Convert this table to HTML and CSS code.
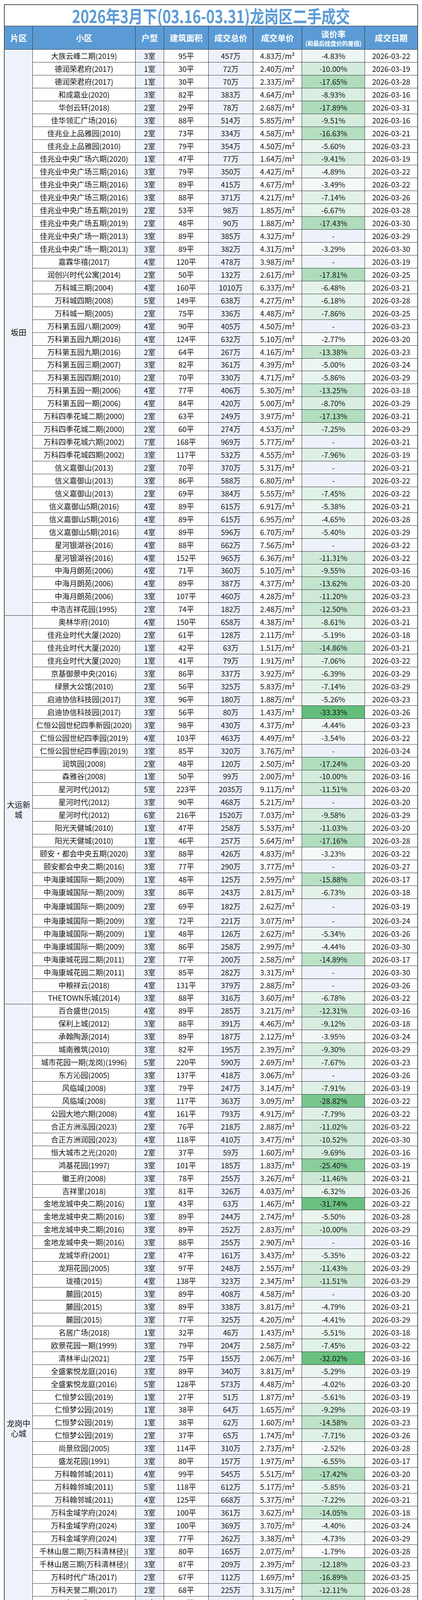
FILE: index.html
```html
<!DOCTYPE html>
<html lang="zh-CN">
<head>
<meta charset="utf-8">
<title>2026年3月下(03.16-03.31)龙岗区二手成交</title>
<link rel="stylesheet" href="styles.css">
</head>
<body>
<div class="sheet">
  <div class="title"><h1>2026年3月下(03.16-03.31)龙岗区二手成交</h1></div>
  <div class="clip">
  <table class="grid">
    <colgroup>
      <col class="w-area"><col class="w-name"><col class="w-room"><col class="w-size"><col class="w-total"><col class="w-unit"><col class="w-rate"><col class="w-date">
    </colgroup>
    <thead>
      <tr><th>片区</th><th>小区</th><th>户型</th><th>建筑面积</th><th>成交总价</th><th>成交单价</th><th><span class="h-main">谈价率</span><span class="h-sub">(和最后挂盘价的差值)</span></th><th>成交日期</th></tr>
    </thead>
    <tbody>
<tr><td class="area" rowspan="44">坂田</td><td>大族云峰二期(2019)</td><td class="tint">3室</td><td>95平</td><td class="tint">457万</td><td>4.83万/m²</td><td class="rate" style="--r:4.83">-4.83%</td><td>2026-03-22</td></tr>
<tr><td>德润荣君府(2017)</td><td class="tint">1室</td><td>30平</td><td class="tint">72万</td><td>2.40万/m²</td><td class="rate" style="--r:10.00">-10.00%</td><td>2026-03-19</td></tr>
<tr><td>德润荣君府(2017)</td><td class="tint">1室</td><td>30平</td><td class="tint">70万</td><td>2.33万/m²</td><td class="rate" style="--r:17.65">-17.65%</td><td>2026-03-28</td></tr>
<tr><td>和成嘉业(2020)</td><td class="tint">3室</td><td>82平</td><td class="tint">383万</td><td>4.64万/m²</td><td class="rate" style="--r:8.93">-8.93%</td><td>2026-03-16</td></tr>
<tr><td>华创云轩(2018)</td><td class="tint">2室</td><td>29平</td><td class="tint">78万</td><td>2.68万/m²</td><td class="rate" style="--r:17.89">-17.89%</td><td>2026-03-31</td></tr>
<tr><td>佳华领汇广场(2016)</td><td class="tint">3室</td><td>88平</td><td class="tint">514万</td><td>5.85万/m²</td><td class="rate" style="--r:9.51">-9.51%</td><td>2026-03-16</td></tr>
<tr><td>佳兆业上品雅园(2010)</td><td class="tint">2室</td><td>73平</td><td class="tint">334万</td><td>4.58万/m²</td><td class="rate" style="--r:16.63">-16.63%</td><td>2026-03-21</td></tr>
<tr><td>佳兆业上品雅园(2010)</td><td class="tint">2室</td><td>79平</td><td class="tint">354万</td><td>4.50万/m²</td><td class="rate" style="--r:5.60">-5.60%</td><td>2026-03-23</td></tr>
<tr><td>佳兆业中央广场六期(2020)</td><td class="tint">1室</td><td>47平</td><td class="tint">77万</td><td>1.64万/m²</td><td class="rate" style="--r:9.41">-9.41%</td><td>2026-03-19</td></tr>
<tr><td>佳兆业中央广场三期(2016)</td><td class="tint">3室</td><td>79平</td><td class="tint">350万</td><td>4.42万/m²</td><td class="rate" style="--r:4.89">-4.89%</td><td>2026-03-22</td></tr>
<tr><td>佳兆业中央广场三期(2016)</td><td class="tint">3室</td><td>89平</td><td class="tint">415万</td><td>4.67万/m²</td><td class="rate" style="--r:3.49">-3.49%</td><td>2026-03-22</td></tr>
<tr><td>佳兆业中央广场三期(2016)</td><td class="tint">3室</td><td>88平</td><td class="tint">371万</td><td>4.21万/m²</td><td class="rate" style="--r:7.14">-7.14%</td><td>2026-03-26</td></tr>
<tr><td>佳兆业中央广场五期(2019)</td><td class="tint">2室</td><td>53平</td><td class="tint">98万</td><td>1.85万/m²</td><td class="rate" style="--r:6.67">-6.67%</td><td>2026-03-28</td></tr>
<tr><td>佳兆业中央广场五期(2019)</td><td class="tint">2室</td><td>48平</td><td class="tint">90万</td><td>1.88万/m²</td><td class="rate" style="--r:17.43">-17.43%</td><td>2026-03-30</td></tr>
<tr><td>佳兆业中央广场一期(2013)</td><td class="tint">3室</td><td>89平</td><td class="tint">385万</td><td>4.32万/m²</td><td class="rate na">-</td><td>2026-03-29</td></tr>
<tr><td>佳兆业中央广场一期(2013)</td><td class="tint">3室</td><td>89平</td><td class="tint">382万</td><td>4.31万/m²</td><td class="rate" style="--r:3.29">-3.29%</td><td>2026-03-30</td></tr>
<tr><td>嘉霖华禧(2017)</td><td class="tint">4室</td><td>120平</td><td class="tint">478万</td><td>3.98万/m²</td><td class="rate na">-</td><td>2026-03-19</td></tr>
<tr><td>润创兴时代公寓(2014)</td><td class="tint">2室</td><td>50平</td><td class="tint">132万</td><td>2.61万/m²</td><td class="rate" style="--r:17.81">-17.81%</td><td>2026-03-25</td></tr>
<tr><td>万科城三期(2004)</td><td class="tint">4室</td><td>160平</td><td class="tint">1010万</td><td>6.33万/m²</td><td class="rate" style="--r:6.48">-6.48%</td><td>2026-03-21</td></tr>
<tr><td>万科城四期(2008)</td><td class="tint">5室</td><td>149平</td><td class="tint">638万</td><td>4.27万/m²</td><td class="rate" style="--r:6.18">-6.18%</td><td>2026-03-28</td></tr>
<tr><td>万科城一期(2005)</td><td class="tint">2室</td><td>75平</td><td class="tint">336万</td><td>4.48万/m²</td><td class="rate" style="--r:7.86">-7.86%</td><td>2026-03-25</td></tr>
<tr><td>万科第五园八期(2009)</td><td class="tint">4室</td><td>90平</td><td class="tint">405万</td><td>4.50万/m²</td><td class="rate na">-</td><td>2026-03-23</td></tr>
<tr><td>万科第五园九期(2016)</td><td class="tint">4室</td><td>124平</td><td class="tint">632万</td><td>5.10万/m²</td><td class="rate" style="--r:2.77">-2.77%</td><td>2026-03-20</td></tr>
<tr><td>万科第五园九期(2016)</td><td class="tint">2室</td><td>64平</td><td class="tint">267万</td><td>4.16万/m²</td><td class="rate" style="--r:13.38">-13.38%</td><td>2026-03-23</td></tr>
<tr><td>万科第五园三期(2007)</td><td class="tint">3室</td><td>82平</td><td class="tint">361万</td><td>4.39万/m²</td><td class="rate" style="--r:5.00">-5.00%</td><td>2026-03-24</td></tr>
<tr><td>万科第五园四期(2010)</td><td class="tint">2室</td><td>70平</td><td class="tint">330万</td><td>4.71万/m²</td><td class="rate" style="--r:5.86">-5.86%</td><td>2026-03-29</td></tr>
<tr><td>万科第五园一期(2006)</td><td class="tint">4室</td><td>77平</td><td class="tint">406万</td><td>5.30万/m²</td><td class="rate" style="--r:13.25">-13.25%</td><td>2026-03-18</td></tr>
<tr><td>万科第五园一期(2006)</td><td class="tint">4室</td><td>84平</td><td class="tint">420万</td><td>5.00万/m²</td><td class="rate" style="--r:8.70">-8.70%</td><td>2026-03-29</td></tr>
<tr><td>万科四季花城二期(2000)</td><td class="tint">2室</td><td>63平</td><td class="tint">249万</td><td>3.97万/m²</td><td class="rate" style="--r:17.13">-17.13%</td><td>2026-03-21</td></tr>
<tr><td>万科四季花城二期(2000)</td><td class="tint">2室</td><td>60平</td><td class="tint">274万</td><td>4.53万/m²</td><td class="rate" style="--r:7.25">-7.25%</td><td>2026-03-29</td></tr>
<tr><td>万科四季花城六期(2002)</td><td class="tint">7室</td><td>168平</td><td class="tint">969万</td><td>5.77万/m²</td><td class="rate na">-</td><td>2026-03-21</td></tr>
<tr><td>万科四季花城四期(2002)</td><td class="tint">3室</td><td>117平</td><td class="tint">532万</td><td>4.55万/m²</td><td class="rate" style="--r:7.96">-7.96%</td><td>2026-03-19</td></tr>
<tr><td>信义嘉御山(2013)</td><td class="tint">2室</td><td>70平</td><td class="tint">370万</td><td>5.31万/m²</td><td class="rate na">-</td><td>2026-03-21</td></tr>
<tr><td>信义嘉御山(2013)</td><td class="tint">3室</td><td>86平</td><td class="tint">588万</td><td>6.80万/m²</td><td class="rate na">-</td><td>2026-03-22</td></tr>
<tr><td>信义嘉御山(2013)</td><td class="tint">2室</td><td>69平</td><td class="tint">384万</td><td>5.55万/m²</td><td class="rate" style="--r:7.45">-7.45%</td><td>2026-03-22</td></tr>
<tr><td>信义嘉御山5期(2016)</td><td class="tint">4室</td><td>89平</td><td class="tint">615万</td><td>6.91万/m²</td><td class="rate" style="--r:5.38">-5.38%</td><td>2026-03-21</td></tr>
<tr><td>信义嘉御山5期(2016)</td><td class="tint">4室</td><td>89平</td><td class="tint">615万</td><td>6.95万/m²</td><td class="rate" style="--r:4.65">-4.65%</td><td>2026-03-28</td></tr>
<tr><td>信义嘉御山5期(2016)</td><td class="tint">4室</td><td>89平</td><td class="tint">596万</td><td>6.70万/m²</td><td class="rate" style="--r:5.40">-5.40%</td><td>2026-03-29</td></tr>
<tr><td>星河银湖谷(2016)</td><td class="tint">4室</td><td>88平</td><td class="tint">662万</td><td>7.56万/m²</td><td class="rate na">-</td><td>2026-03-22</td></tr>
<tr><td>星河银湖谷(2016)</td><td class="tint">4室</td><td>152平</td><td class="tint">965万</td><td>6.36万/m²</td><td class="rate" style="--r:11.31">-11.31%</td><td>2026-03-22</td></tr>
<tr><td>中海月朗苑(2006)</td><td class="tint">4室</td><td>71平</td><td class="tint">360万</td><td>5.10万/m²</td><td class="rate" style="--r:9.55">-9.55%</td><td>2026-03-16</td></tr>
<tr><td>中海月朗苑(2006)</td><td class="tint">4室</td><td>89平</td><td class="tint">387万</td><td>4.37万/m²</td><td class="rate" style="--r:13.62">-13.62%</td><td>2026-03-20</td></tr>
<tr><td>中海月朗苑(2006)</td><td class="tint">3室</td><td>107平</td><td class="tint">460万</td><td>4.28万/m²</td><td class="rate" style="--r:11.20">-11.20%</td><td>2026-03-23</td></tr>
<tr><td>中浩吉祥花园(1995)</td><td class="tint">2室</td><td>74平</td><td class="tint">182万</td><td>2.48万/m²</td><td class="rate" style="--r:12.50">-12.50%</td><td>2026-03-23</td></tr>
<tr><td class="area" rowspan="30">大运新城</td><td>奥林华府(2010)</td><td class="tint">4室</td><td>150平</td><td class="tint">658万</td><td>4.38万/m²</td><td class="rate" style="--r:8.61">-8.61%</td><td>2026-03-21</td></tr>
<tr><td>佳兆业时代大厦(2020)</td><td class="tint">2室</td><td>61平</td><td class="tint">128万</td><td>2.11万/m²</td><td class="rate" style="--r:5.19">-5.19%</td><td>2026-03-18</td></tr>
<tr><td>佳兆业时代大厦(2020)</td><td class="tint">1室</td><td>42平</td><td class="tint">63万</td><td>1.51万/m²</td><td class="rate" style="--r:14.86">-14.86%</td><td>2026-03-21</td></tr>
<tr><td>佳兆业时代大厦(2020)</td><td class="tint">1室</td><td>41平</td><td class="tint">79万</td><td>1.91万/m²</td><td class="rate" style="--r:7.06">-7.06%</td><td>2026-03-22</td></tr>
<tr><td>京基御景中央(2016)</td><td class="tint">3室</td><td>86平</td><td class="tint">337万</td><td>3.92万/m²</td><td class="rate" style="--r:6.39">-6.39%</td><td>2026-03-29</td></tr>
<tr><td>绿景大公馆(2010)</td><td class="tint">2室</td><td>56平</td><td class="tint">325万</td><td>5.83万/m²</td><td class="rate" style="--r:7.14">-7.14%</td><td>2026-03-29</td></tr>
<tr><td>启迪协信科技园(2017)</td><td class="tint">3室</td><td>96平</td><td class="tint">180万</td><td>1.88万/m²</td><td class="rate" style="--r:5.26">-5.26%</td><td>2026-03-23</td></tr>
<tr><td>启迪协信科技园(2017)</td><td class="tint">3室</td><td>56平</td><td class="tint">80万</td><td>1.43万/m²</td><td class="rate" style="--r:33.33">-33.33%</td><td>2026-03-26</td></tr>
<tr><td>仁恒公园世纪四季新园(2020)</td><td class="tint">3室</td><td>98平</td><td class="tint">430万</td><td>4.37万/m²</td><td class="rate" style="--r:4.44">-4.44%</td><td>2026-03-23</td></tr>
<tr><td>仁恒公园世纪四季园(2019)</td><td class="tint">4室</td><td>103平</td><td class="tint">463万</td><td>4.49万/m²</td><td class="rate" style="--r:3.54">-3.54%</td><td>2026-03-22</td></tr>
<tr><td>仁恒公园世纪四季园(2019)</td><td class="tint">3室</td><td>85平</td><td class="tint">320万</td><td>3.76万/m²</td><td class="rate na">-</td><td>2026-03-24</td></tr>
<tr><td>润筑园(2008)</td><td class="tint">2室</td><td>48平</td><td class="tint">120万</td><td>2.50万/m²</td><td class="rate" style="--r:17.24">-17.24%</td><td>2026-03-20</td></tr>
<tr><td>森雅谷(2008)</td><td class="tint">1室</td><td>50平</td><td class="tint">99万</td><td>2.00万/m²</td><td class="rate" style="--r:10.00">-10.00%</td><td>2026-03-16</td></tr>
<tr><td>星河时代(2012)</td><td class="tint">5室</td><td>223平</td><td class="tint">2035万</td><td>9.11万/m²</td><td class="rate" style="--r:11.51">-11.51%</td><td>2026-03-20</td></tr>
<tr><td>星河时代(2012)</td><td class="tint">3室</td><td>90平</td><td class="tint">468万</td><td>5.21万/m²</td><td class="rate na">-</td><td>2026-03-20</td></tr>
<tr><td>星河时代(2012)</td><td class="tint">6室</td><td>216平</td><td class="tint">1520万</td><td>7.03万/m²</td><td class="rate" style="--r:9.58">-9.58%</td><td>2026-03-29</td></tr>
<tr><td>阳光天健城(2010)</td><td class="tint">1室</td><td>47平</td><td class="tint">258万</td><td>5.53万/m²</td><td class="rate" style="--r:11.03">-11.03%</td><td>2026-03-20</td></tr>
<tr><td>阳光天健城(2010)</td><td class="tint">1室</td><td>46平</td><td class="tint">257万</td><td>5.64万/m²</td><td class="rate" style="--r:17.16">-17.16%</td><td>2026-03-28</td></tr>
<tr><td>颐安·都会中央五期(2020)</td><td class="tint">3室</td><td>88平</td><td class="tint">426万</td><td>4.83万/m²</td><td class="rate" style="--r:3.23">-3.23%</td><td>2026-03-22</td></tr>
<tr><td>颐安都会中央二期(2016)</td><td class="tint">3室</td><td>77平</td><td class="tint">290万</td><td>3.77万/m²</td><td class="rate na">-</td><td>2026-03-27</td></tr>
<tr><td>中海康城国际一期(2009)</td><td class="tint">1室</td><td>48平</td><td class="tint">125万</td><td>2.59万/m²</td><td class="rate" style="--r:15.88">-15.88%</td><td>2026-03-17</td></tr>
<tr><td>中海康城国际一期(2009)</td><td class="tint">3室</td><td>86平</td><td class="tint">243万</td><td>2.81万/m²</td><td class="rate" style="--r:6.73">-6.73%</td><td>2026-03-18</td></tr>
<tr class="tall"><td>中海康城国际一期(2009)</td><td class="tint">2室</td><td>69平</td><td class="tint">182万</td><td>2.62万/m²</td><td class="rate na">-</td><td>2026-03-19</td></tr>
<tr><td>中海康城国际一期(2009)</td><td class="tint">3室</td><td>72平</td><td class="tint">221万</td><td>3.07万/m²</td><td class="rate na">-</td><td>2026-03-24</td></tr>
<tr><td>中海康城国际一期(2009)</td><td class="tint">1室</td><td>48平</td><td class="tint">126万</td><td>2.62万/m²</td><td class="rate" style="--r:5.34">-5.34%</td><td>2026-03-26</td></tr>
<tr><td>中海康城国际一期(2009)</td><td class="tint">3室</td><td>86平</td><td class="tint">258万</td><td>2.99万/m²</td><td class="rate" style="--r:4.44">-4.44%</td><td>2026-03-30</td></tr>
<tr><td>中海康城花园二期(2011)</td><td class="tint">2室</td><td>77平</td><td class="tint">200万</td><td>2.58万/m²</td><td class="rate" style="--r:14.89">-14.89%</td><td>2026-03-17</td></tr>
<tr><td>中海康城花园二期(2011)</td><td class="tint">3室</td><td>85平</td><td class="tint">282万</td><td>3.31万/m²</td><td class="rate na">-</td><td>2026-03-30</td></tr>
<tr><td>中粮祥云(2018)</td><td class="tint">4室</td><td>131平</td><td class="tint">379万</td><td>2.88万/m²</td><td class="rate na">-</td><td>2026-03-26</td></tr>
<tr><td>THETOWN乐城(2014)</td><td class="tint">3室</td><td>88平</td><td class="tint">316万</td><td>3.60万/m²</td><td class="rate" style="--r:6.78">-6.78%</td><td>2026-03-22</td></tr>
<tr><td class="area area-last" rowspan="64">龙岗中心城</td><td>百合盛世(2015)</td><td class="tint">4室</td><td>89平</td><td class="tint">285万</td><td>3.21万/m²</td><td class="rate" style="--r:12.31">-12.31%</td><td>2026-03-16</td></tr>
<tr><td>保利上城(2012)</td><td class="tint">3室</td><td>88平</td><td class="tint">391万</td><td>4.46万/m²</td><td class="rate" style="--r:9.12">-9.12%</td><td>2026-03-18</td></tr>
<tr><td>承翰陶源(2014)</td><td class="tint">3室</td><td>89平</td><td class="tint">187万</td><td>2.12万/m²</td><td class="rate" style="--r:3.95">-3.95%</td><td>2026-03-24</td></tr>
<tr><td>城南雅筑(2010)</td><td class="tint">3室</td><td>82平</td><td class="tint">195万</td><td>2.39万/m²</td><td class="rate" style="--r:9.30">-9.30%</td><td>2026-03-29</td></tr>
<tr><td>城市花园一期(龙岗)(1996)</td><td class="tint">5室</td><td>220平</td><td class="tint">590万</td><td>2.69万/m²</td><td class="rate" style="--r:7.67">-7.67%</td><td>2026-03-23</td></tr>
<tr><td>东方沁园(2005)</td><td class="tint">3室</td><td>137平</td><td class="tint">418万</td><td>3.06万/m²</td><td class="rate na">-</td><td>2026-03-26</td></tr>
<tr><td>风临域(2008)</td><td class="tint">3室</td><td>79平</td><td class="tint">247万</td><td>3.14万/m²</td><td class="rate" style="--r:7.91">-7.91%</td><td>2026-03-19</td></tr>
<tr><td>风临域(2008)</td><td class="tint">3室</td><td>117平</td><td class="tint">363万</td><td>3.09万/m²</td><td class="rate" style="--r:28.82">-28.82%</td><td>2026-03-22</td></tr>
<tr><td>公园大地六期(2008)</td><td class="tint">4室</td><td>161平</td><td class="tint">793万</td><td>4.91万/m²</td><td class="rate" style="--r:7.79">-7.79%</td><td>2026-03-22</td></tr>
<tr><td>合正方洲泓园(2023)</td><td class="tint">2室</td><td>76平</td><td class="tint">218万</td><td>2.88万/m²</td><td class="rate" style="--r:11.02">-11.02%</td><td>2026-03-22</td></tr>
<tr><td>合正方洲润园(2023)</td><td class="tint">4室</td><td>118平</td><td class="tint">410万</td><td>3.47万/m²</td><td class="rate" style="--r:10.52">-10.52%</td><td>2026-03-30</td></tr>
<tr><td>恒大城市之光(2020)</td><td class="tint">2室</td><td>37平</td><td class="tint">59万</td><td>1.60万/m²</td><td class="rate" style="--r:9.69">-9.69%</td><td>2026-03-16</td></tr>
<tr><td>鸿基花园(1997)</td><td class="tint">3室</td><td>101平</td><td class="tint">185万</td><td>1.83万/m²</td><td class="rate" style="--r:25.40">-25.40%</td><td>2026-03-19</td></tr>
<tr><td>徽王府(2008)</td><td class="tint">3室</td><td>78平</td><td class="tint">255万</td><td>3.26万/m²</td><td class="rate" style="--r:11.46">-11.46%</td><td>2026-03-21</td></tr>
<tr><td>吉祥里(2018)</td><td class="tint">3室</td><td>81平</td><td class="tint">326万</td><td>4.03万/m²</td><td class="rate" style="--r:6.32">-6.32%</td><td>2026-03-26</td></tr>
<tr><td>金地龙城中央二期(2016)</td><td class="tint">1室</td><td>43平</td><td class="tint">63万</td><td>1.46万/m²</td><td class="rate" style="--r:31.74">-31.74%</td><td>2026-03-22</td></tr>
<tr><td>金地龙城中央二期(2016)</td><td class="tint">3室</td><td>89平</td><td class="tint">244万</td><td>2.74万/m²</td><td class="rate" style="--r:5.50">-5.50%</td><td>2026-03-28</td></tr>
<tr><td>金地龙城中央二期(2016)</td><td class="tint">3室</td><td>89平</td><td class="tint">252万</td><td>2.83万/m²</td><td class="rate" style="--r:10.00">-10.00%</td><td>2026-03-29</td></tr>
<tr><td>金地龙城中央一期(2016)</td><td class="tint">3室</td><td>88平</td><td class="tint">255万</td><td>2.90万/m²</td><td class="rate na">-</td><td>2026-03-16</td></tr>
<tr><td>龙城华府(2001)</td><td class="tint">2室</td><td>47平</td><td class="tint">161万</td><td>3.43万/m²</td><td class="rate" style="--r:5.35">-5.35%</td><td>2026-03-22</td></tr>
<tr><td>龙翔花园(2005)</td><td class="tint">3室</td><td>97平</td><td class="tint">248万</td><td>2.55万/m²</td><td class="rate" style="--r:11.43">-11.43%</td><td>2026-03-29</td></tr>
<tr><td>珑禧(2015)</td><td class="tint">4室</td><td>138平</td><td class="tint">323万</td><td>2.34万/m²</td><td class="rate" style="--r:11.51">-11.51%</td><td>2026-03-29</td></tr>
<tr><td>麓园(2015)</td><td class="tint">3室</td><td>89平</td><td class="tint">408万</td><td>4.58万/m²</td><td class="rate na">-</td><td>2026-03-20</td></tr>
<tr><td>麓园(2015)</td><td class="tint">3室</td><td>89平</td><td class="tint">338万</td><td>3.81万/m²</td><td class="rate" style="--r:4.79">-4.79%</td><td>2026-03-21</td></tr>
<tr><td>麓园(2015)</td><td class="tint">3室</td><td>77平</td><td class="tint">325万</td><td>4.20万/m²</td><td class="rate" style="--r:4.41">-4.41%</td><td>2026-03-29</td></tr>
<tr><td>名居广场(2018)</td><td class="tint">1室</td><td>32平</td><td class="tint">46万</td><td>1.43万/m²</td><td class="rate" style="--r:5.51">-5.51%</td><td>2026-03-18</td></tr>
<tr><td>欧景花园一期(1999)</td><td class="tint">3室</td><td>79平</td><td class="tint">204万</td><td>2.58万/m²</td><td class="rate" style="--r:7.45">-7.45%</td><td>2026-03-22</td></tr>
<tr><td>清林半山(2021)</td><td class="tint">2室</td><td>75平</td><td class="tint">155万</td><td>2.06万/m²</td><td class="rate" style="--r:32.02">-32.02%</td><td>2026-03-16</td></tr>
<tr><td>全盛紫悦龙庭(2016)</td><td class="tint">3室</td><td>89平</td><td class="tint">340万</td><td>3.81万/m²</td><td class="rate" style="--r:5.29">-5.29%</td><td>2026-03-19</td></tr>
<tr><td>全盛紫悦龙庭(2016)</td><td class="tint">5室</td><td>128平</td><td class="tint">573万</td><td>4.48万/m²</td><td class="rate" style="--r:4.02">-4.02%</td><td>2026-03-20</td></tr>
<tr><td>仁恒梦公园(2019)</td><td class="tint">1室</td><td>27平</td><td class="tint">51万</td><td>1.87万/m²</td><td class="rate" style="--r:5.61">-5.61%</td><td>2026-03-19</td></tr>
<tr><td>仁恒梦公园(2019)</td><td class="tint">1室</td><td>38平</td><td class="tint">64万</td><td>1.65万/m²</td><td class="rate" style="--r:9.29">-9.29%</td><td>2026-03-19</td></tr>
<tr><td>仁恒梦公园(2019)</td><td class="tint">1室</td><td>38平</td><td class="tint">62万</td><td>1.60万/m²</td><td class="rate" style="--r:14.58">-14.58%</td><td>2026-03-23</td></tr>
<tr><td>仁恒梦公园(2019)</td><td class="tint">2室</td><td>37平</td><td class="tint">65万</td><td>1.74万/m²</td><td class="rate" style="--r:7.71">-7.71%</td><td>2026-03-26</td></tr>
<tr><td>尚景欣园(2005)</td><td class="tint">3室</td><td>114平</td><td class="tint">310万</td><td>2.73万/m²</td><td class="rate" style="--r:2.52">-2.52%</td><td>2026-03-28</td></tr>
<tr><td>盛龙花园(1991)</td><td class="tint">3室</td><td>80平</td><td class="tint">157万</td><td>1.97万/m²</td><td class="rate" style="--r:6.55">-6.55%</td><td>2026-03-17</td></tr>
<tr><td>万科翰邻城(2011)</td><td class="tint">4室</td><td>99平</td><td class="tint">545万</td><td>5.51万/m²</td><td class="rate" style="--r:17.42">-17.42%</td><td>2026-03-20</td></tr>
<tr><td>万科翰邻城(2011)</td><td class="tint">5室</td><td>118平</td><td class="tint">612万</td><td>5.17万/m²</td><td class="rate" style="--r:5.85">-5.85%</td><td>2026-03-21</td></tr>
<tr><td>万科翰邻城(2011)</td><td class="tint">4室</td><td>125平</td><td class="tint">668万</td><td>5.37万/m²</td><td class="rate" style="--r:7.22">-7.22%</td><td>2026-03-21</td></tr>
<tr><td>万科金域学府(2024)</td><td class="tint">3室</td><td>100平</td><td class="tint">361万</td><td>3.62万/m²</td><td class="rate" style="--r:14.05">-14.05%</td><td>2026-03-18</td></tr>
<tr><td>万科金域学府(2024)</td><td class="tint">3室</td><td>100平</td><td class="tint">369万</td><td>3.70万/m²</td><td class="rate" style="--r:4.40">-4.40%</td><td>2026-03-24</td></tr>
<tr><td>万科金域学府(2024)</td><td class="tint">3室</td><td>77平</td><td class="tint">262万</td><td>3.38万/m²</td><td class="rate" style="--r:4.73">-4.73%</td><td>2026-03-29</td></tr>
<tr><td>千林山居二期(万科清林径)(</td><td class="tint">3室</td><td>80平</td><td class="tint">165万</td><td>2.07万/m²</td><td class="rate" style="--r:1.79">-1.79%</td><td>2026-03-28</td></tr>
<tr><td>千林山居三期(万科清林径)(</td><td class="tint">3室</td><td>87平</td><td class="tint">209万</td><td>2.39万/m²</td><td class="rate" style="--r:12.18">-12.18%</td><td>2026-03-23</td></tr>
<tr><td>万科时代广场(2017)</td><td class="tint">2室</td><td>67平</td><td class="tint">112万</td><td>1.69万/m²</td><td class="rate" style="--r:16.89">-16.89%</td><td>2026-03-25</td></tr>
<tr><td>万科天誉二期(2017)</td><td class="tint">2室</td><td>68平</td><td class="tint">225万</td><td>3.31万/m²</td><td class="rate" style="--r:12.11">-12.11%</td><td>2026-03-28</td></tr>
<tr><td>万象天成(2010)</td><td class="tint">2室</td><td>71平</td><td class="tint">143万</td><td>2.03万/m²</td><td class="rate" style="--r:13.33">-13.33%</td><td>2026-03-22</td></tr>
<tr><td>万象天成(2010)</td><td class="tint">4室</td><td>133平</td><td class="tint">327万</td><td>2.46万/m²</td><td class="rate" style="--r:9.31">-9.31%</td><td>2026-03-30</td></tr>
<tr><td>新鸿花园(1997)</td><td class="tint">6室</td><td>105平</td><td class="tint">406万</td><td>3.87万/m²</td><td class="rate na">-</td><td>2026-03-31</td></tr>
<tr><td>学府道花园(2013)</td><td class="tint">3室</td><td>86平</td><td class="tint">381万</td><td>4.43万/m²</td><td class="rate na">-</td><td>2026-03-16</td></tr>
<tr><td>雅豪祥苑(2003)</td><td class="tint">5室</td><td>171平</td><td class="tint">285万</td><td>1.67万/m²</td><td class="rate" style="--r:1.72">-1.72%</td><td>2026-03-22</td></tr>
<tr><td>阳光广场(2005)</td><td class="tint">2室</td><td>62平</td><td class="tint">104万</td><td>1.68万/m²</td><td class="rate" style="--r:7.14">-7.14%</td><td>2026-03-16</td></tr>
<tr><td>依山郡花园三期(2006)</td><td class="tint">1室</td><td>57平</td><td class="tint">261万</td><td>4.60万/m²</td><td class="rate" style="--r:6.12">-6.12%</td><td>2026-03-29</td></tr>
<tr><td>御景蓝湾公馆(2018)</td><td class="tint">3室</td><td>88平</td><td class="tint">340万</td><td>3.88万/m²</td><td class="rate" style="--r:10.53">-10.53%</td><td>2026-03-18</td></tr>
<tr><td>远洋新干线二期(2017)</td><td class="tint">3室</td><td>85平</td><td class="tint">224万</td><td>2.64万/m²</td><td class="rate" style="--r:5.30">-5.30%</td><td>2026-03-28</td></tr>
<tr><td>远洋新干线晶钻广场(2015)</td><td class="tint">1室</td><td>32平</td><td class="tint">48万</td><td>1.49万/m²</td><td class="rate" style="--r:4.00">-4.00%</td><td>2026-03-16</td></tr>
<tr><td>远洋新干线晶钻广场(2015)</td><td class="tint">1室</td><td>32平</td><td class="tint">44万</td><td>1.38万/m²</td><td class="rate" style="--r:15.38">-15.38%</td><td>2026-03-20</td></tr>
<tr><td>远洋新干线远洋广场(2019)</td><td class="tint">2室</td><td>57平</td><td class="tint">80万</td><td>1.40万/m²</td><td class="rate" style="--r:11.11">-11.11%</td><td>2026-03-31</td></tr>
<tr><td>远洋新天地水岸花园(2019)</td><td class="tint">3室</td><td>89平</td><td class="tint">233万</td><td>2.62万/m²</td><td class="rate" style="--r:4.90">-4.90%</td><td>2026-03-22</td></tr>
<tr><td>远洋新天地水岸花园(2019)</td><td class="tint">3室</td><td>89平</td><td class="tint">231万</td><td>2.59万/m²</td><td class="rate" style="--r:7.60">-7.60%</td><td>2026-03-23</td></tr>
<tr><td>远洋新天地水岸花园(2019)</td><td class="tint">1室</td><td>47平</td><td class="tint">53万</td><td>1.12万/m²</td><td class="rate" style="--r:8.97">-8.97%</td><td>2026-03-27</td></tr>
<tr><td>远洋新天地水岸花园(2019)</td><td class="tint">1室</td><td>45平</td><td class="tint">46万</td><td>1.01万/m²</td><td class="rate" style="--r:18.57">-18.57%</td><td>2026-03-28</td></tr>
<tr><td>长江花园(2001)</td><td class="tint">3室</td><td>94平</td><td class="tint">219万</td><td>2.33万/m²</td><td class="rate" style="--r:4.37">-4.37%</td><td>2026-03-30</td></tr>
<tr><td>中央悦城(2007)</td><td class="tint">2室</td><td>91平</td><td class="tint">213万</td><td>2.33万/m²</td><td class="rate" style="--r:20.33">-20.33%</td><td>2026-03-21</td></tr>
    </tbody>
  </table>
  </div>
</div>
</body>
</html>
```

FILE: styles.css
```css
* {
  box-sizing: border-box;
}

html,
body {
  margin: 0;
  padding: 0;
  background: #ffffff;
}

body {
  font-family: "Noto Sans CJK SC", "Noto Sans", "Liberation Sans", sans-serif;
  color: #151515;
}

.sheet {
  margin: 11px 0 0 10px;
  width: 1060px;
  border: 2px solid #555555;
  border-bottom: 0;
}

.title {
  height: 54px;
  border-bottom: 1px solid #333333;
  display: flex;
  align-items: center;
  justify-content: center;
  padding-top: 2px;
}

.title h1 {
  margin: 0;
  font-size: 36.6px;
  line-height: 40px;
  font-weight: 700;
  color: #5b9bd5;
  transform: scaleY(1.22);
  white-space: nowrap;
}

.clip {
  height: 4591px;
  overflow: hidden;
}

.grid {
  width: 1056px;
  table-layout: fixed;
  border-collapse: separate;
  border-spacing: 0;
}

.w-area { width: 72px; }
.w-name { width: 263px; }
.w-room { width: 73px; }
.w-size { width: 114px; }
.w-total { width: 114px; }
.w-unit { width: 125px; }
.w-rate { width: 161px; }
.w-date { width: 134px; }

.grid th,
.grid td {
  padding: 0;
  text-align: center;
  vertical-align: middle;
  border-right: 1px solid #333333;
  border-bottom: 1px solid #333333;
  white-space: nowrap;
  overflow: hidden;
}

.grid tr > :last-child {
  border-right: 0;
}

.grid thead tr {
  height: 60px;
}

.grid th {
  background: #5b9bd5;
  color: #ffffff;
  font-size: 21px;
  font-weight: 700;
  line-height: 1.2;
}

.h-main {
  display: block;
  font-size: 21px;
  line-height: 26px;
}

.h-sub {
  display: block;
  font-size: 15px;
  line-height: 20px;
  padding-top: 2px;
  letter-spacing: -0.2px;
}

.grid tbody tr {
  height: 32.95px;
}

.grid tbody tr.tall {
  height: 40px;
}

.grid td {
  font-size: 19px;
  line-height: 22px;
  background: #ffffff;
}

.grid td.area {
  background: #eef3fb;
  white-space: normal;
  padding: 0 5px;
  font-size: 20px;
  line-height: 26px;
}

.grid td.area-last {
  padding-top: 64px;
}

.grid td.tint {
  background: #edf2fa;
}

.grid td.rate {
  background: #fcfcff;
  background: color-mix(in srgb, #63be7b calc((var(--r) - 1.72) * 3.1636%), #fcfcff);
}

.grid td.rate.na {
  background: #edf2fa;
}
```
